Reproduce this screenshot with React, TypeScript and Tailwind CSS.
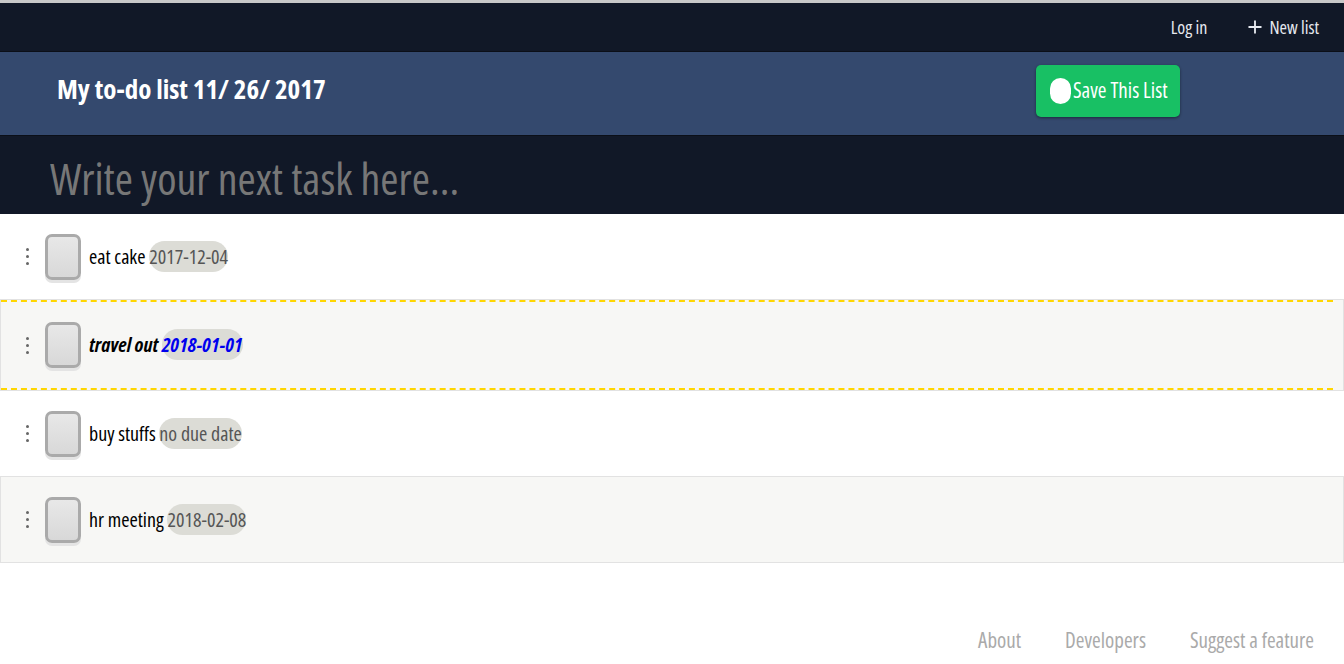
import { Plus } from 'lucide-react';

type Task = {
  title: string;
  due: string;
  highlighted?: boolean;
  shaded?: boolean;
};

const tasks: Task[] = [
  { title: 'eat cake', due: '2017-12-04' },
  { title: 'travel out', due: '2018-01-01', highlighted: true, shaded: true },
  { title: 'buy stuffs', due: 'no due date' },
  { title: 'hr meeting', due: '2018-02-08', shaded: true },
];

function Kebab() {
  return (
    <div className="flex w-[10px] flex-col items-center gap-[4px]">
      <span className="h-[3px] w-[3px] rounded-full bg-[#666]" />
      <span className="h-[3px] w-[3px] rounded-full bg-[#666]" />
      <span className="h-[3px] w-[3px] rounded-full bg-[#666]" />
    </div>
  );
}

function Checkbox() {
  return (
    <div className="ml-[5px] h-[46px] w-[36px] rounded-[7px] border-[3px] border-[#aaa] bg-gradient-to-b from-[#e8e8e8] to-[#d8d8d8] shadow-[0_3px_0_#e4e4e4]" />
  );
}

function TaskRow({ task }: { task: Task }) {
  return (
    <div
      className={
        task.shaded
          ? 'border border-[#e2e2e2] bg-[#f7f7f5]'
          : 'border-x border-transparent bg-white'
      }
    >
      <div
        className={
          task.highlighted
            ? 'mr-[10px] flex h-[90px] items-center gap-[8px] border-y-2 border-dashed border-[#ffd600] pl-[21px]'
            : 'flex h-[85px] items-center gap-[8px] pl-[21px]'
        }
      >
        <Kebab />
        <Checkbox />
        {task.highlighted ? (
          <span className="text-[20px] font-bold italic text-black">
            {task.title}{' '}
            <span className="rounded-full bg-[#dcdcd6] py-[2px] text-[#0000ee]">{task.due}</span>
          </span>
        ) : (
          <span className="text-[20px] text-black">
            {task.title}{' '}
            <span className="rounded-full bg-[#dcdcd6] py-[2px] text-[#555]">{task.due}</span>
          </span>
        )}
      </div>
    </div>
  );
}

export default function App() {
  return (
    <div className="min-h-[664px] bg-white font-['Open_Sans',sans-serif] [font-stretch:75%]">
      <div className="h-[3px] bg-[#c8c8c8]" />
      {/* Top nav */}
      <nav className="flex h-[48px] items-center justify-end gap-[38px] bg-[#111827] pr-[25px] text-[18px] text-[#e6e9ef]">
        <a>Log in</a>
        <a className="flex items-center gap-[4px]">
          <Plus size={20} strokeWidth={2.2} />
          New list
        </a>
      </nav>
      {/* Title bar */}
      <header className="flex h-[84px] items-center border-t border-[#0b0f18] bg-[#34496e]">
        <h1 className="w-[1036px] pb-[8px] pl-[57px] text-[27px] font-bold text-white">My to-do list 11/ 26/ 2017</h1>
        <button className="mb-[6px] flex h-[52px] items-center gap-[2px] rounded-[5px] bg-[#18c064] pl-[14px] pr-[12px] text-[21px] text-white shadow-[0_1px_3px_rgba(0,0,0,0.45)]">
          <span className="h-[26px] w-[21px] rounded-full bg-white" />
          Save This List
        </button>
      </header>
      {/* New task input */}
      <div className="flex h-[79px] items-center border-t border-[#0b0f18] bg-[#111827] pl-[50px]">
        <input
          className="w-full bg-transparent pt-[6px] text-[44px] text-white outline-none placeholder:text-[#777]"
          placeholder="Write your next task here..."
        />
      </div>
      {/* Tasks */}
      <div>
        {tasks.map((t) => (
          <TaskRow key={t.title} task={t} />
        ))}
      </div>
      {/* Footer */}
      <footer className="flex justify-end gap-[44px] pr-[30px] pt-[62px] text-[21px] text-[#aaa]">
        <a>About</a>
        <a>Developers</a>
        <a>Suggest a feature</a>
      </footer>
    </div>
  );
}
